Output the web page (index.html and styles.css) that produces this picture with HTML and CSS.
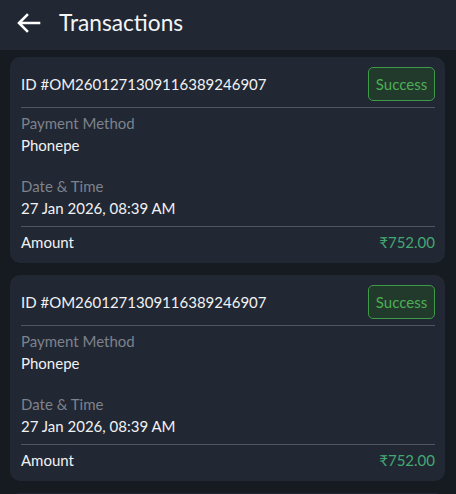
FILE: index.html
```html
<!DOCTYPE html>
<html>
<head>
<meta charset="utf-8">
<link rel="stylesheet" href="styles.css">
</head>
<body>
<header class="topbar">
  <svg class="back" width="24" height="20" viewBox="0 0 24 20"><path d="M22 10H3M10 2L2 10l8 8" fill="none" stroke="#fff" stroke-width="2.6" stroke-linecap="square" stroke-linejoin="miter"/></svg>
  <h1 class="title">Transactions</h1>
</header>
<main class="list">
  <section class="card">
    <div class="row-top">
      <span class="txid">ID #OM2601271309116389246907</span>
      <span class="badge">Success</span>
    </div>
    <div class="divider"></div>
    <div class="info">
      <div class="label">Payment Method</div>
      <div class="value">Phonepe</div>
      <div class="label gap">Date &amp; Time</div>
      <div class="value">27 Jan 2026, 08:39 AM</div>
    </div>
    <div class="divider mid"></div>
    <div class="row-amount">
      <span class="value">Amount</span>
      <span class="amount">₹752.00</span>
    </div>
  </section>
  <section class="card">
    <div class="row-top">
      <span class="txid">ID #OM2601271309116389246907</span>
      <span class="badge">Success</span>
    </div>
    <div class="divider"></div>
    <div class="info">
      <div class="label">Payment Method</div>
      <div class="value">Phonepe</div>
      <div class="label gap">Date &amp; Time</div>
      <div class="value">27 Jan 2026, 08:39 AM</div>
    </div>
    <div class="divider mid"></div>
    <div class="row-amount">
      <span class="value">Amount</span>
      <span class="amount">₹752.00</span>
    </div>
  </section>
  <section class="card card-peek"></section>
</main>
</body>
</html>
```

FILE: styles.css
```css
* { box-sizing: border-box; }
html, body { margin: 0; padding: 0; }
body {
  background: #161a21;
  font-family: Lato, "Noto Sans", sans-serif;
  color: #f1f2f4;
  height: 494px;
  overflow: hidden;
}
.topbar {
  height: 50px;
  background: #222833;
  display: flex;
  align-items: center;
  padding: 0 0 5px 17px;
}
.back { display: block; }
.title {
  margin: 0 0 0 18px;
  font-size: 22.7px;
  font-weight: 400;
  color: #f4f5f7;
}
.list {
  display: flex;
  flex-direction: column;
  gap: 12px;
  padding: 7px 11px 0 10px;
}
.card {
  background: #212733;
  border-radius: 10px;
  padding: 10px 10px 10px 11px;
  flex-shrink: 0;
}
.card-peek { height: 60px; }
.row-top {
  display: flex;
  align-items: center;
  justify-content: space-between;
  height: 34px;
}
.txid { font-size: 15px; color: #f1f2f4; }
.badge {
  height: 34px;
  width: 67px;
  display: flex;
  align-items: center;
  justify-content: center;
  border: 1px solid #3d9a47;
  border-radius: 5px;
  background: #223a2c;
  color: #4cae55;
  font-size: 15px;
}
.divider {
  height: 1px;
  background: #4e5563;
  margin-top: 6px;
}
.divider.mid { margin-top: 7px; }
.info { padding-top: 4px; }
.label { font-size: 15px; line-height: 22px; color: #7d828c; }
.label.gap { margin-top: 19px; }
.value { font-size: 15px; line-height: 22px; color: #f1f2f4; }
.row-amount {
  display: flex;
  justify-content: space-between;
  align-items: center;
  padding-top: 4px;
  line-height: 22px;
}
.amount { font-size: 15px; color: #44a772; }
```
